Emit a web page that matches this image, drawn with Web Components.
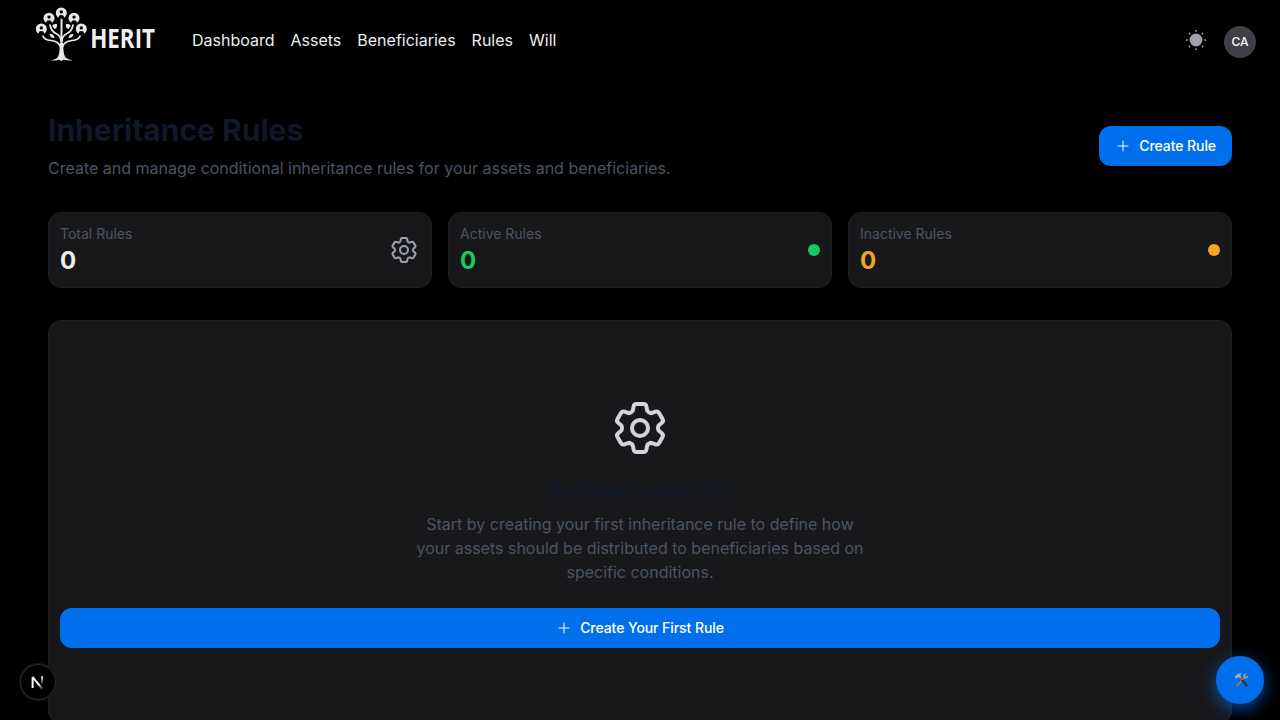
<!DOCTYPE html>
<html lang="en">
<head>
<meta charset="utf-8">
<title>Herit – Inheritance Rules</title>
<style>
html,body{margin:0;height:100%;background:#000;overflow:hidden}
body{font-family:Inter,"Liberation Sans",sans-serif;color:#ecedee;font-size:16px;line-height:24px}
</style>
</head>
<body>
<herit-app></herit-app>
<script>
const define = (name, html) => customElements.define(name, class extends HTMLElement {
  constructor() {
    super();
    const t = document.createElement('template');
    t.innerHTML = html;
    this.attachShadow({ mode: 'open' }).append(t.content.cloneNode(true));
  }
});

define('icon-cog', `<style>:host{display:block;width:32px;height:32px}svg{display:block;width:100%;height:100%}</style>
<svg viewBox="0 0 24 24" fill="none" stroke="currentColor" stroke-width="1.5" stroke-linecap="round" stroke-linejoin="round"><path d="M9.594 3.94c.09-.542.56-.94 1.11-.94h2.593c.55 0 1.02.398 1.11.94l.213 1.281c.063.374.313.686.645.87.074.04.147.083.22.127.325.196.72.257 1.075.124l1.217-.456a1.125 1.125 0 0 1 1.37.49l1.296 2.247a1.125 1.125 0 0 1-.26 1.431l-1.003.827c-.293.241-.438.613-.43.992a7.723 7.723 0 0 1 0 .255c-.008.378.137.75.43.991l1.004.827c.424.35.534.955.26 1.43l-1.298 2.247a1.125 1.125 0 0 1-1.369.491l-1.217-.456c-.355-.133-.75-.072-1.076.124a6.47 6.47 0 0 1-.22.128c-.331.183-.581.495-.644.869l-.213 1.281c-.09.543-.56.94-1.11.94h-2.594c-.55 0-1.019-.398-1.11-.94l-.213-1.281c-.062-.374-.312-.686-.644-.87a6.52 6.52 0 0 1-.22-.127c-.325-.196-.72-.257-1.076-.124l-1.217.456a1.125 1.125 0 0 1-1.369-.49l-1.297-2.247a1.125 1.125 0 0 1 .26-1.431l1.004-.827c.292-.24.437-.613.43-.991a6.932 6.932 0 0 1 0-.255c.007-.38-.138-.751-.43-.992l-1.004-.827a1.125 1.125 0 0 1-.26-1.43l1.297-2.247a1.125 1.125 0 0 1 1.37-.491l1.216.456c.356.133.751.072 1.076-.124.072-.044.146-.086.22-.128.332-.183.582-.495.644-.869l.214-1.28Z"/><path d="M15 12a3 3 0 1 1-6 0 3 3 0 0 1 6 0Z"/></svg>`);

define('icon-sun', `<style>:host{display:block;width:22px;height:22px;color:#a1a1aa}svg{display:block}</style>
<svg width="22" height="22" viewBox="0 0 24 24" fill="currentColor"><path d="M19 12a7 7 0 11-7-7 7 7 0 017 7z"/><path d="M12 22.96a.969.969 0 01-1-.96v-.08a1 1 0 012 0 1.038 1.038 0 01-1 1.04zm7.14-2.82a1.024 1.024 0 01-.71-.29l-.13-.13a1 1 0 011.41-1.41l.13.13a1 1 0 010 1.41.984.984 0 01-.7.29zm-14.28 0a1.024 1.024 0 01-.71-.29 1 1 0 010-1.41l.13-.13a1 1 0 011.41 1.41l-.13.13a1 1 0 01-.7.29zM22 13h-.08a1 1 0 010-2 1.038 1.038 0 011.04 1 .969.969 0 01-.96 1zM2.08 13H2a1 1 0 010-2 1.038 1.038 0 011.04 1 .969.969 0 01-.96 1zm16.93-7.01a1.024 1.024 0 01-.71-.29 1 1 0 010-1.41l.13-.13a1 1 0 011.41 1.41l-.13.13a.984.984 0 01-.7.29zm-14.02 0a1.024 1.024 0 01-.71-.29l-.13-.14a1 1 0 011.41-1.41l.13.13a1 1 0 010 1.41.97.97 0 01-.7.3zM12 3.04a.969.969 0 01-1-.96V2a1 1 0 012 0 1.038 1.038 0 01-1 1.04z"/></svg>`);

define('herit-logo', `<style>:host{display:block;width:128px;height:64px}svg{display:block}text{font:700 26px "Open Sans","Noto Sans",sans-serif}</style>
<svg width="128" height="64" viewBox="32 0 128 64">
<defs><g id="p"><circle r="5.5" fill="#e8e8e8"/><circle cy="-1.1" r="1.7"/><path d="M-2.8 5.8V4.2Q-2.6 2 0 2Q2.6 2 2.8 4.2V5.8Z"/></g></defs>
<g fill="none" stroke="#e8e8e8" stroke-linecap="round" stroke-width="1.7">
<path d="M61.5 19V50" stroke-width="2"/><path d="M50 25Q51 31 56 33.500Q61 36 61 41M73 25Q72 31 67 33.500Q62 36 62 41"/><path d="M43 36Q44 40 51 40.500Q59 41.500 60.500 47M80 36Q79 40 72 40.500Q64 41.500 62.500 47"/></g>
<path fill="#e8e8e8" d="M59.700 43H63.300Q63 54 65.500 57.500Q68 59.500 73 60.500Q68 60.300 66 60.300L63.500 59.500L61.500 61L59 59.700L55.500 60.500L50 60.500Q55.500 59.500 57.600 57.500Q60 54 59.700 43ZM52.300 26Q52.500 23.500 57 24Q57.500 28.500 54.500 29ZM70.700 26Q70.500 23.500 66 24Q65.500 28.500 68.500 29ZM49.500 34Q54 33.500 54.500 38Q50.500 38.500 49.500 34ZM73.500 34Q69 33.500 68.500 38Q72.500 38.500 73.500 34Z"/>
<use href="#p" x="61.300" y="13"/><use href="#p" x="49" y="18.200"/><use href="#p" x="74" y="18.200"/><use href="#p" x="41.300" y="29"/><use href="#p" x="81.300" y="29"/>
<text transform="translate(90.200 47.700) scale(.8 1)" x="0" y="0" textLength="81" lengthAdjust="spacingAndGlyphs" fill="#f0f0f0">HERIT</text>
</svg>`);

define('nav-link', `<style>:host{display:block}</style><slot></slot>`);

define('user-avatar', `<style>:host{display:flex;align-items:center;justify-content:center;width:32px;height:32px;border-radius:50%;background:#3f3f46;color:#fff;font-size:12px;line-height:16px;font-weight:500}</style><slot></slot>`);

define('top-bar', `<style>:host{display:flex;align-items:center;height:80px;padding:0 24px 0 32px;box-sizing:border-box}
herit-logo{margin:-16px 32px 0 0}
nav{display:flex;gap:16px;flex:1}.r{display:flex;align-items:center;gap:17px;margin-top:3px}icon-sun{margin-top:-3px}</style>
<herit-logo></herit-logo><nav><nav-link>Dashboard</nav-link><nav-link>Assets</nav-link><nav-link>Beneficiaries</nav-link><nav-link>Rules</nav-link><nav-link>Will</nav-link></nav>
<div class="r"><icon-sun></icon-sun><user-avatar>CA</user-avatar></div>`);

define('primary-button', `<style>:host{display:flex;align-items:center;justify-content:center;gap:8px;height:40px;padding:0 16px;box-sizing:border-box;border-radius:12px;background:#006fee;color:#fff;font-size:14px;line-height:20px;font-weight:500;letter-spacing:-.075px}svg{display:block}</style>
<svg width="16" height="16" viewBox="0 0 24 24" fill="none" stroke="currentColor" stroke-width="1.5" stroke-linecap="round"><path d="M12 4.500v15m7.500-7.500h-15"/></svg><span><slot></slot></span>`);

define('stat-card', `<style>:host{display:flex;align-items:center;justify-content:space-between;height:76px;padding:12px;box-sizing:border-box;border-radius:14px;background:#18181b;box-shadow:inset 0 0 0 1px #1e1e21}
.l{font-size:14px;line-height:20px;color:#4b5563}.v{font-size:24px;line-height:32px;padding-top:1px;margin-bottom:-1px;font-weight:740;color:var(--value,#ecedee)}</style>
<div><div class="l"><slot name="label"></slot></div><div class="v"><slot></slot></div></div><slot name="mark"></slot>`);

define('status-dot', `<style>:host{display:block;width:12px;height:12px;border-radius:50%;background:var(--value)}</style>`);

define('page-heading', `<style>:host{display:flex;align-items:center;justify-content:space-between}
h1{margin:0 0 8px;font-size:30px;line-height:36px;font-weight:700;color:#111827}p{margin:0;color:#4b5563}</style>
<div><h1>Inheritance Rules</h1><p>Create and manage conditional inheritance rules for your assets and beneficiaries.</p></div><primary-button>Create Rule</primary-button>`);

define('empty-state', `<style>:host{display:block;padding:76px 12px;border-radius:14px;background:#18181b;box-shadow:inset 0 0 0 1px #1e1e21;text-align:center}
icon-cog{width:64px;height:64px;margin:0 auto 17px;color:#d1d5db}
h3{margin:0 0 7px;font-size:18px;line-height:28px;font-weight:600;color:#111827}p{max-width:448px;margin:0 auto 24px;color:#4b5563}</style>
<icon-cog></icon-cog><h3>No Rules Created Yet</h3><p>Start by creating your first inheritance rule to define how your assets should be distributed to beneficiaries based on specific conditions.</p><primary-button>Create Your First Rule</primary-button>`);

define('dev-badge', `<style>:host{position:absolute;left:20px;top:664px;width:36px;height:36px;border-radius:50%;background:#000;box-shadow:0 0 0 1px #171717,inset 0 0 0 1px #2a2a2a}svg{display:block}</style>
<svg width="36" height="36" viewBox="0 0 36 36"><defs><linearGradient id="a" x1="0" y1="0" x2="1" y2="1"><stop offset=".6" stop-color="#fff"/><stop offset="1" stop-color="#fff" stop-opacity=".1"/></linearGradient><linearGradient id="b" x1="0" y1="0" x2="0" y2="1"><stop stop-color="#fff"/><stop offset="1" stop-color="#fff" stop-opacity="0"/></linearGradient></defs>
<path d="M12.600 24V13.200L22.500 25" fill="none" stroke="url(#a)" stroke-width="2" stroke-linejoin="bevel"/><rect x="21.200" y="12.300" width="1.900" height="8.700" fill="url(#b)"/></svg>`);

define('tool-button', `<style>:host{position:absolute;left:1216px;top:656px;width:48px;height:48px;border-radius:50%;background:#006fee;box-shadow:0 5px 16px #006feea6;display:flex;align-items:center;justify-content:center}svg{display:block;margin:-1px 0 0 3px}</style>
<svg width="15" height="16" viewBox="0 0 15 16" fill="none" stroke-linecap="round"><path d="M10 6.500L3 14" stroke="#5d6268" stroke-width="2.300"/><path d="M10.200 6L3 13.600" stroke="#a8abb0" stroke-width="1"/><path d="M12.700 1.200Q9.500 1.300 9.300 4Q9.300 6.500 11.500 6.700Q14 6.500 14 3.600L12 4.700L11 3.500Z" fill="#9a9da2"/><path d="M5.800 4.800L12.500 13.500" stroke="#38332f" stroke-width="2.300"/><path d="M5.800 4.500L8 7.500" stroke="#8d9095" stroke-width="1.500"/><path d="M.6 5.200L2.400 3Q4.600 .7 8 1.500L6.300 3L7 4.500L5.300 6L4 4.900L2.300 6.700Z" fill="#aaadb2"/></svg>`);

define('herit-app', `<style>:host{display:block;position:relative;height:720px;overflow:hidden}main{padding:32px 48px 0}
.stats{display:grid;grid-template-columns:repeat(3,1fr);gap:16px;margin:32px 0}.g{--value:#17c964}.o{--value:#f5a524}icon-cog{color:#9ca3af}</style>
<top-bar></top-bar><main><page-heading></page-heading>
<div class="stats"><stat-card><span slot="label">Total Rules</span>0<icon-cog slot="mark"></icon-cog></stat-card>
<stat-card class="g"><span slot="label">Active Rules</span>0<status-dot slot="mark"></status-dot></stat-card>
<stat-card class="o"><span slot="label">Inactive Rules</span>0<status-dot slot="mark"></status-dot></stat-card></div>
<empty-state></empty-state></main><dev-badge></dev-badge><tool-button></tool-button>`);
</script>
</body>
</html>
